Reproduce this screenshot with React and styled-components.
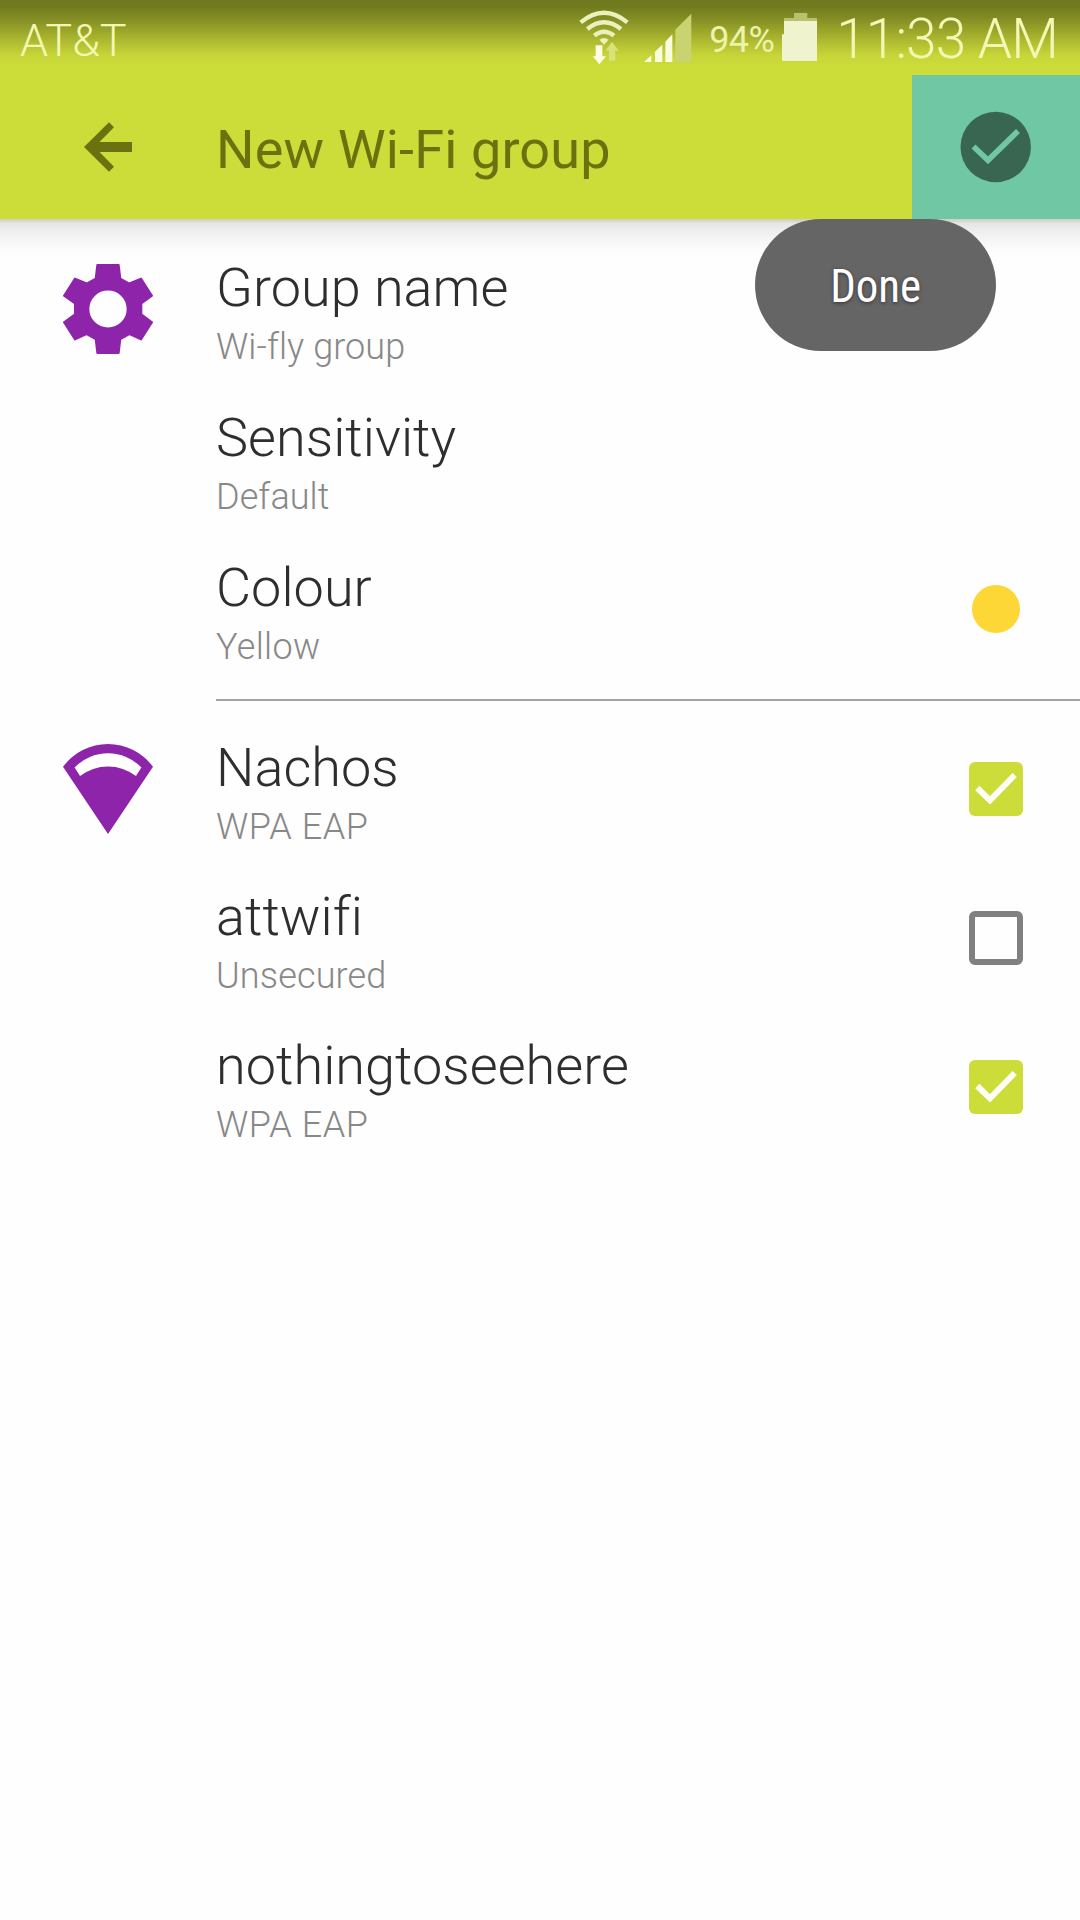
import React from "react";
import styled, { createGlobalStyle } from "styled-components";

const GlobalStyle = createGlobalStyle`
  * { box-sizing: border-box; }
  body {
    margin: 0;
    background: #fefefe;
    font-family: Roboto, "Liberation Sans", sans-serif;
    font-variant-ligatures: none;
  }
  svg { display: block; flex: none; }
`;

const Screen = styled.div`
  width: 1080px;
  height: 1920px;
  display: flex;
  flex-direction: column;
  background: #fefefe;
  overflow: hidden;
`;

const Header = styled.header`
  flex: none;
  height: 219px;
  background:
    linear-gradient(#6f791f 0px, #717b1e 6px, #828c24 18px, #9ba62a 31px, #b4c032 44px, #c8d639 56px, #ccdc39 66px, #ccdc39 100%);
`;

const StatusBar = styled.div`
  display: flex;
  align-items: flex-start;
  height: 75px;
  padding: 0 22px 0 20px;
`;

const StatusText = styled.span`
  font-size: ${(p) => p.$size}px;
  line-height: ${(p) => p.$line}px;
  font-weight: ${(p) => p.$weight || 300};
  letter-spacing: ${(p) => p.$spacing || 0}px;
  padding-top: ${(p) => p.$top}px;
  margin-left: ${(p) => p.$left || 0}px;
  white-space: nowrap;
  color: ${(p) => p.$color || "#f2f8b4"};
`;

const StatusIcons = styled.div`
  display: flex;
  align-items: flex-start;
  margin-left: auto;
`;

const SignalSvg = styled.svg`
  margin-left: 15px;
`;

const BatterySvg = styled.svg`
  margin-left: 8px;
`;

const Toolbar = styled.div`
  display: flex;
  align-items: stretch;
  height: 144px;
`;

const BackButton = styled.button`
  width: 216px;
  padding: 0 0 0 84px;
  border: 0;
  background: none;
  display: flex;
  align-items: center;
`;

const Title = styled.h1`
  flex: 1;
  margin: 0;
  padding-top: 43px;
  font-size: 54px;
  line-height: 64px;
  font-weight: 400;
  letter-spacing: 0.15px;
  color: #6a7210;
`;

const DoneButton = styled.button`
  width: 168px;
  border: 0;
  padding: 0;
  background: #70c7a3;
  display: flex;
  align-items: center;
  justify-content: center;
`;

const Content = styled.main`
  position: relative;
  flex: 1;
  padding-top: 19px;
  background: linear-gradient(#cfcfc0 0px, #d6d6cc 2px, #e4e4e4 4px, #ececec 10px, #f5f5f5 20px, #fcfcfc 31px, #fefefe 40px);
`;

const Tooltip = styled.div`
  position: absolute;
  top: 0;
  left: 755px;
  width: 241px;
  height: 132px;
  padding-top: 2px;
  border-radius: 66px;
  background: #656565;
  display: flex;
  align-items: center;
  justify-content: center;
`;

const TooltipText = styled.span`
  font-family: "Roboto Condensed", Roboto, sans-serif;
  font-size: 47px;
  line-height: 56px;
  font-weight: 400;
  color: #fff;
  text-shadow: 0 1px 4px rgba(0, 0, 0, 0.5);
  transform: scaleX(${(p) => p.$stretch});
`;

const Section = styled.section`
  display: flex;
  align-items: flex-start;
`;

const IconColumn = styled.div`
  width: 216px;
  padding: 26px 0 0 63px;
`;

const Rows = styled.div`
  flex: 1;
`;

const Row = styled.div`
  display: flex;
  justify-content: space-between;
  height: ${(p) => p.$height}px;
  padding-top: 18px;
`;

const RowTitle = styled.div`
  font-size: 54px;
  line-height: 64px;
  font-weight: 300;
  letter-spacing: 0.04px;
  color: #2e2e2e;
`;

const RowSub = styled.div`
  margin-top: 6px;
  font-size: 36px;
  line-height: 42px;
  font-weight: 300;
  letter-spacing: ${(p) => p.$track}px;
  color: #888;
`;

const Control = styled.div`
  width: 168px;
  height: 106px;
  display: flex;
  align-items: center;
  justify-content: center;
`;

const Swatch = styled.span`
  width: 48px;
  height: 48px;
  border-radius: 50%;
  background: #fdd735;
`;

const Box = styled.span`
  width: 54px;
  height: 54px;
  border-radius: 6px;
  border: ${(p) => (p.$on ? "0" : "6px solid #808080")};
  background: ${(p) => (p.$on ? "#ccdc39" : "transparent")};
`;

const Divider = styled.hr`
  height: 2px;
  margin: 14px 0 17px 216px;
  border: 0;
  background: #a2a2a2;
`;

const WifiStatus = () => (
  <svg width="50" height="64" viewBox="57 0 150 192">
    <g fill="none" stroke="#ebf1bd" strokeWidth="13">
      <path d="M62 67 Q132 9 202 67" />
      <path d="M82 87 Q132 46 183 87" />
      <path d="M103 107 Q132 83 162 107" />
    </g>
    <path d="M118 119 Q132 109 146 119 L132 134Z" fill="#ebf1bd" />
    <path d="M107 136H127V169H138L118 193L98 169H107Z" fill="#fbfde6" />
    <path d="M147 182V152H136L156 126L177 152H166V182Z" fill="#d7e27a" />
  </svg>
);

const Signal = () => (
  <SignalSvg width="48" height="63" viewBox="251 0 144 189">
    <path d="M393 41V187H345V89Z" fill="#c9d36f" />
    <path d="M251 186L273 166V186Z M284 155L306 134V186H284Z M315 125L336 103V186H315Z" fill="#fafce0" />
  </SignalSvg>
);

const Battery = () => (
  <BatterySvg width="35" height="62" viewBox="666 0 105 186">
    <path d="M702 39H742V54H771V63H672V54H702Z" fill="#b9c16c" />
    <path d="M672 63H771V183H666V103H672Z" fill="#eff3ce" />
  </BatterySvg>
);

const Gear = () => (
  <svg width="90" height="90" viewBox="69 71 270 272" preserveAspectRatio="none">
    <path
      fill="#8e24aa"
      stroke="#8e24aa"
      strokeWidth="6"
      strokeLinejoin="round"
      fillRule="evenodd"
      d="M172 74H236L241 115L268 130L303 115L336 167L304 190V223L336 247L303 299L268 283L241 298L236 340H172L167 298L140 283L105 299L72 247L105 223V190L72 167L105 115L140 130L167 115Z M204 148A59 59 0 1 0 204 266A59 59 0 1 0 204 148Z"
    />
  </svg>
);

const WifiFan = () => (
  <svg width="90" height="90" viewBox="69 191 270 272" preserveAspectRatio="none">
    <path
      fill="#8e24aa"
      fillRule="evenodd"
      d="M69 260A167 167 0 0 1 339 260L204 463Z M104 262A138 138 0 0 1 304 262L288 288A136 136 0 0 0 120 288Z"
    />
  </svg>
);

const Tick = () => (
  <svg width="54" height="54" viewBox="0 0 162 162">
    <path d="M25 78L63 115L137 39" fill="none" stroke="#fffffa" strokeWidth="18" />
  </svg>
);

const SettingRow = ({ title, sub, track = 0.08, height = 149, children }) => (
  <Row $height={height}>
    <div>
      <RowTitle>{title}</RowTitle>
      <RowSub $track={track}>{sub}</RowSub>
    </div>
    {children && <Control>{children}</Control>}
  </Row>
);

const networks = [
  { name: "Nachos", security: "WPA EAP", track: 0.6, on: true },
  { name: "attwifi", security: "Unsecured", track: 0.15, on: false },
  { name: "nothingtoseehere", security: "WPA EAP", track: 0.6, on: true },
];

export default function App() {
  return (
    <Screen>
      <GlobalStyle />
      <Header>
        <StatusBar>
          <StatusText $size={45} $line={53} $top={14}>AT&amp;T</StatusText>
          <StatusIcons>
            <WifiStatus />
            <Signal />
            <StatusText $size={36} $line={42} $top={19} $left={17} $weight={400} $spacing={-0.6} $color="#ecf3ac">94%</StatusText>
            <Battery />
            <StatusText $size={55} $line={64} $top={7} $left={19} $spacing={-0.9}>11:33 AM</StatusText>
          </StatusIcons>
        </StatusBar>
        <Toolbar>
          <BackButton aria-label="Back">
            <svg width="48" height="50" viewBox="84 122 48 50">
              <path d="M84 147L109 122.3L114 127.3L99.5 142H132V152H99.5L114 166.7L109 171.7Z" fill="#6a7210" />
            </svg>
          </BackButton>
          <Title>New Wi-Fi group</Title>
          <DoneButton aria-label="Done">
            <svg width="72" height="72" viewBox="960 111 72 72">
              <circle cx="995.7" cy="147" r="35.2" fill="#386650" />
              <path d="M973.5 146.5L988 160.3L1018 131" fill="none" stroke="#70c7a3" strokeWidth="5.6" />
            </svg>
          </DoneButton>
        </Toolbar>
      </Header>
      <Content>
        <Section>
          <IconColumn><Gear /></IconColumn>
          <Rows>
            <SettingRow title="Group name" sub="Wi-fly group" height={150} />
            <SettingRow title="Sensitivity" sub="Default" height={150} />
            <SettingRow title="Colour" sub="Yellow" track={0.3} height={147}><Swatch /></SettingRow>
          </Rows>
        </Section>
        <Divider />
        <Section>
          <IconColumn><WifiFan /></IconColumn>
          <Rows>
            {networks.map((n) => (
              <SettingRow key={n.name} title={n.name} sub={n.security} track={n.track}>
                <Box $on={n.on}>{n.on && <Tick />}</Box>
              </SettingRow>
            ))}
          </Rows>
        </Section>
        <Tooltip><TooltipText $stretch={0.955}>Done</TooltipText></Tooltip>
      </Content>
    </Screen>
  );
}
